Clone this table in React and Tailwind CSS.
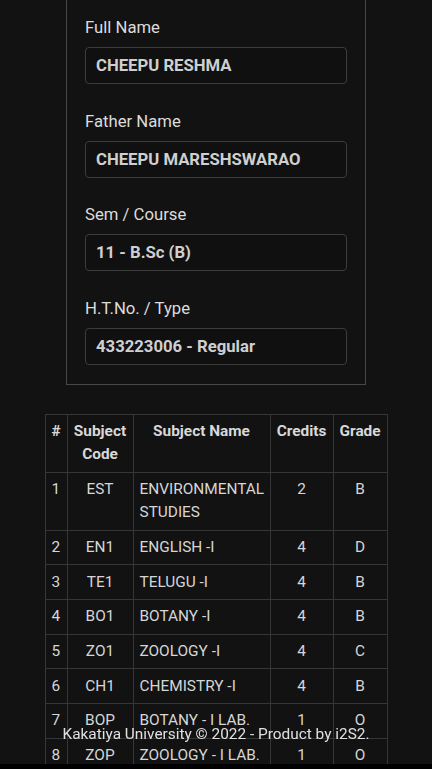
const fields = [
  { label: 'Full Name', value: 'CHEEPU RESHMA' },
  { label: 'Father Name', value: 'CHEEPU MARESHSWARAO' },
  { label: 'Sem / Course', value: '11 - B.Sc (B)' },
  { label: 'H.T.No. / Type', value: '433223006 - Regular' },
];

const subjects = [
  { code: 'EST', name: 'ENVIRONMENTAL STUDIES', credits: 2, grade: 'B' },
  { code: 'EN1', name: 'ENGLISH -I', credits: 4, grade: 'D' },
  { code: 'TE1', name: 'TELUGU -I', credits: 4, grade: 'B' },
  { code: 'BO1', name: 'BOTANY -I', credits: 4, grade: 'B' },
  { code: 'ZO1', name: 'ZOOLOGY -I', credits: 4, grade: 'C' },
  { code: 'CH1', name: 'CHEMISTRY -I', credits: 4, grade: 'B' },
  { code: 'BOP', name: 'BOTANY - I LAB.', credits: 1, grade: 'O' },
  { code: 'ZOP', name: 'ZOOLOGY - I LAB.', credits: 1, grade: 'O' },
  { code: 'CHP', name: 'CHEMISTRY - I LAB.', credits: 1, grade: 'O' },
];

const cell = 'border border-[#363636] px-[6px] py-[5.2px] align-top';

export default function App() {
  return (
    <div
      className="h-[769px] overflow-hidden bg-[#121212] text-[#d6d6d6]"
      style={{ fontFamily: 'Roboto, "Liberation Sans", sans-serif' }}
    >
      {/* student details card, top edge scrolled off */}
      <div className="mx-auto mt-[-6px] w-[300px] border border-[#474747] px-[18px] pt-[21px] pb-[19px]">
        {fields.map((f, i) => (
          <div key={f.label} className={i > 0 ? 'mt-[25.6px]' : ''}>
            <div className="text-[16.7px] leading-[24px] text-[#dcdcdc]">{f.label}</div>
            <div className="mt-[7px] h-[37px] rounded-[4px] border border-[#3c3c3c] bg-[#101010] px-[10px] text-[16.7px] font-bold leading-[35px] text-[#cfcfcf]">
              {f.value}
            </div>
          </div>
        ))}
      </div>

      <table className="mx-auto mt-[29px] w-[342px] table-fixed border-collapse text-[15.4px] leading-[23.3px]">
        <thead>
          <tr className="font-bold text-[#d8d8d8]">
            <th className={`${cell} w-[22px] text-center`}>#</th>
            <th className={`${cell} w-[66px] text-center`}>Subject Code</th>
            <th className={`${cell} w-[137px] text-center`}>Subject Name</th>
            <th className={`${cell} w-[63px] text-center whitespace-nowrap`}>Credits</th>
            <th className={`${cell} w-[54px] text-center whitespace-nowrap`}>Grade</th>
          </tr>
        </thead>
        <tbody>
          {subjects.map((s, i) => (
            <tr key={s.code}>
              <td className={`${cell} text-left`}>{i + 1}</td>
              <td className={`${cell} text-center`}>{s.code}</td>
              <td className={`${cell} text-left`}>{s.name}</td>
              <td className={`${cell} text-center`}>{s.credits}</td>
              <td className={`${cell} text-center`}>{s.grade}</td>
            </tr>
          ))}
        </tbody>
      </table>

      <div className="fixed inset-x-0 bottom-[23px] text-center text-[15.4px] leading-[24px] text-[#e0e0e0]">
        Kakatiya University © 2022 - Product by i2S2.
      </div>
      <div className="fixed inset-x-0 bottom-0 h-[5px] bg-black" />
    </div>
  );
}
